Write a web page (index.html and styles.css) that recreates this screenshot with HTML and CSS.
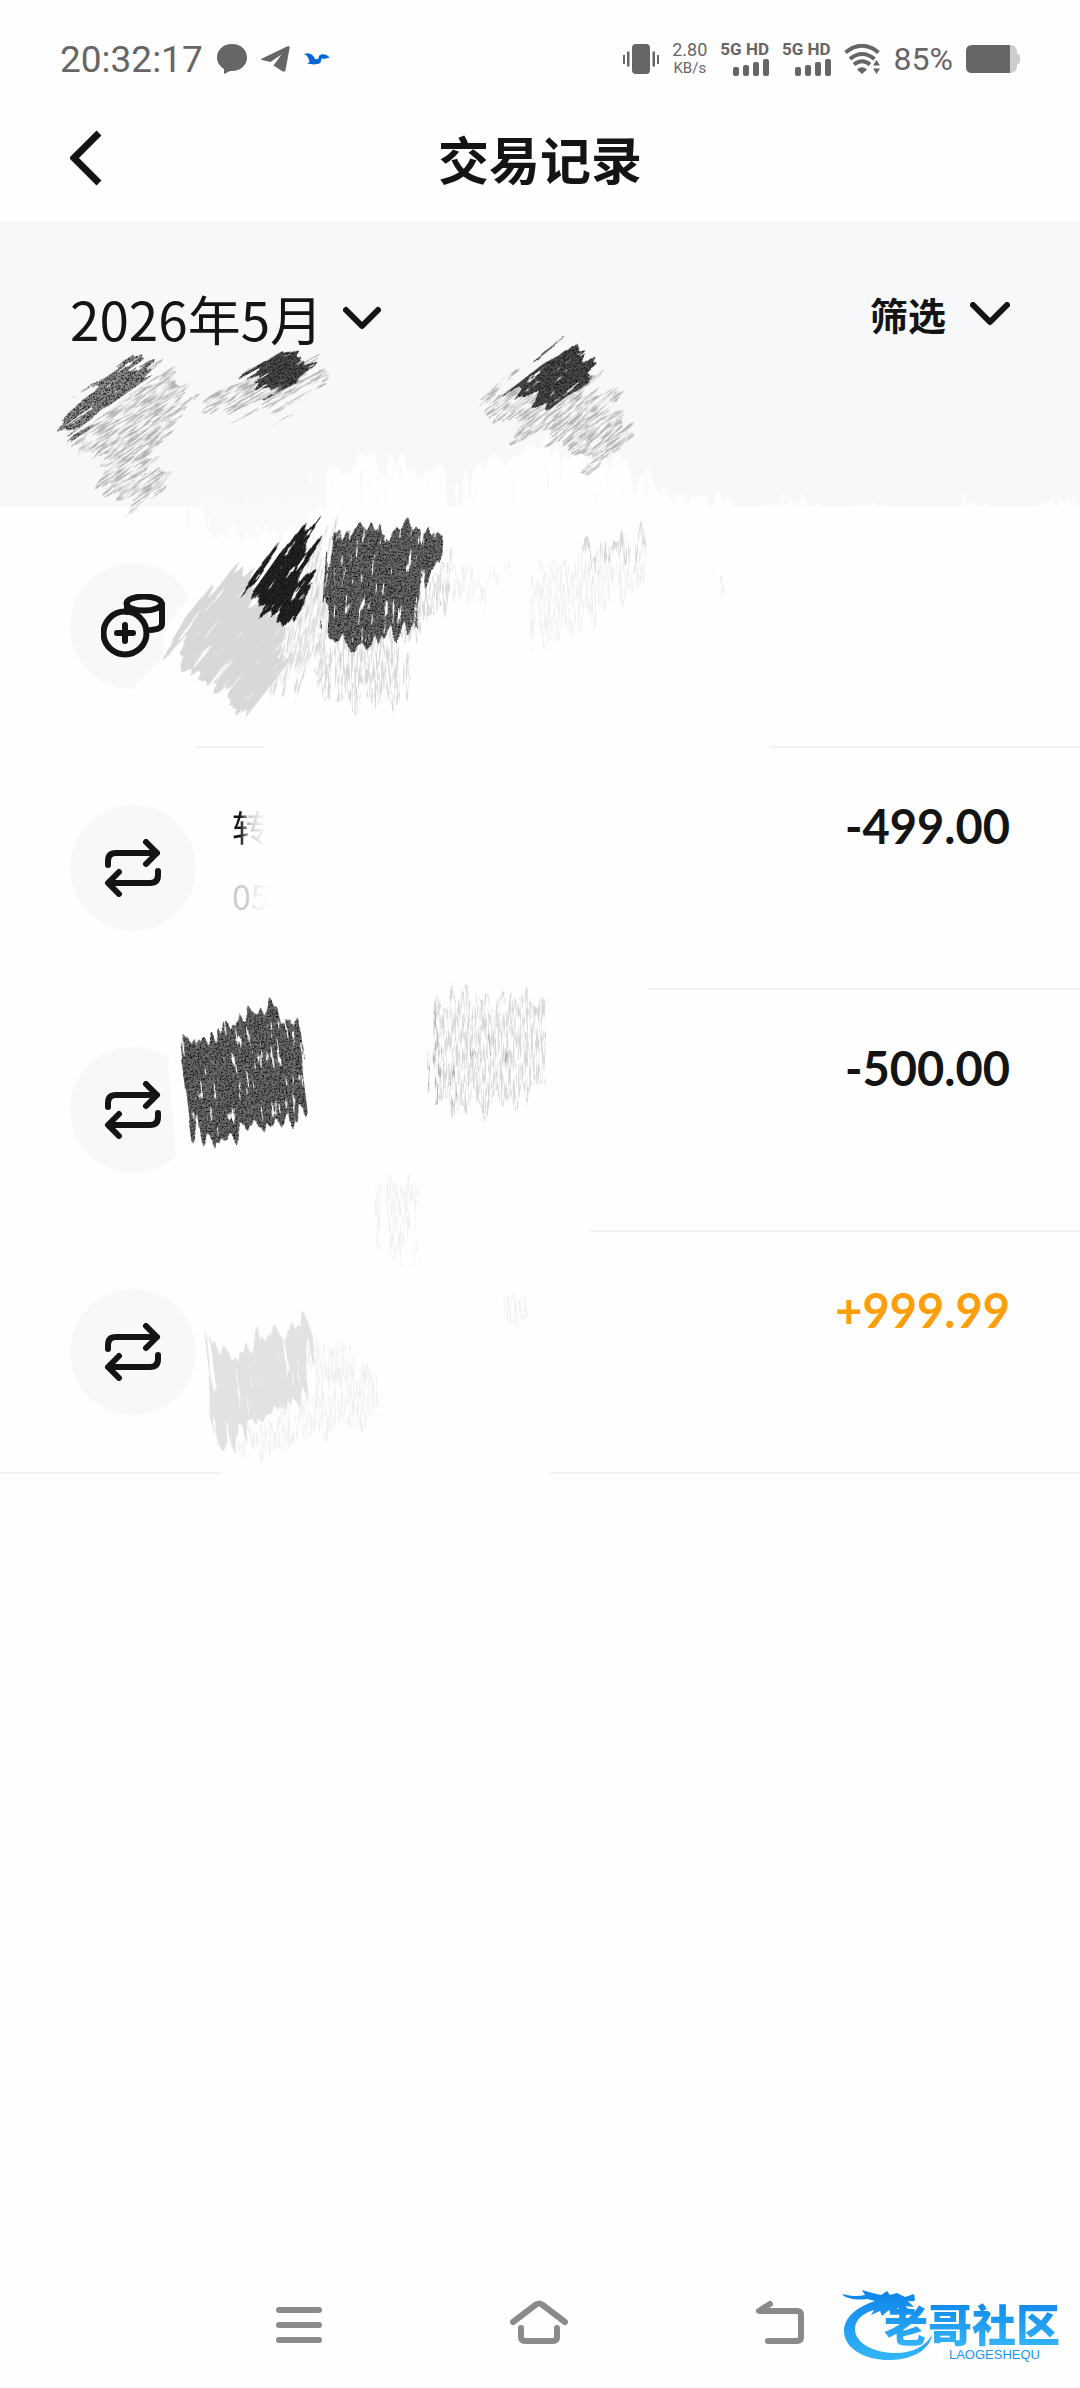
FILE: index.html
```html
<!DOCTYPE html>
<html lang="zh-CN">
<head>
  <meta charset="UTF-8">
  <meta name="viewport" content="width=device-width, initial-scale=1.0">
  <title>交易记录</title>
  <link rel="stylesheet" href="styles.css">
</head>
<body>
  <div class="status-bar">
    <div class="status-left">
      <span class="time">20:32:17</span>
      <svg class="icon-bubble" width="30" height="30" viewBox="0 0 30 30"><path d="M15 0C6 0 0 6 0 13.500c0 5 3 9 7 11.500l0 5 6-3h2c9 0 15-6 15-13.500S24 0 15 0z"/></svg>
      <svg class="icon-plane" width="29" height="26" viewBox="0 0 29 26"><path d="M0 13 26 .5c2-.8 3 0 2.500 2L24.500 24c-.4 2-1.500 2-3 1.200L12.500 19.500l8-11-11 7.500L1 14c-1-.3-1-.7-1-1z"/></svg>
      <svg class="icon-bird" width="26" height="12" viewBox="0 0 26 12"><path d="M0 1C5-1 9 1 11 6c3 1 4-1 4-3 3-3 8-2 11 2-3-1-4 1-6 1-2-1-3 0-3 2 0 2-2 3-4 3-3 1-6 0-10 0 2-1 3-2 2-4C4 4 3 2 0 1z"/></svg>
    </div>
    <div class="status-right">
      <svg width="36" height="30" viewBox="0 0 36 30"><rect x="9" width="18" height="30" rx="4"/><path d="M0 11h2v9H0zM4 7.500h2.500v15H4zM29.500 7.500H32v15h-2.500zM34 11h2v9h-2z"/></svg>
      <div class="speed"><span>2.80</span><small>KB/s</small></div>
      <div class="signal">
        <b>5G HD</b>
        <svg width="36" height="17" viewBox="0 0 36 17"><rect y="8" width="6" height="9" rx="2"/><rect x="10" y="6" width="6" height="11" rx="2"/><rect x="20" y="3" width="6" height="14" rx="2"/><rect x="30" width="6" height="17" rx="2"/></svg>
      </div>
      <div class="signal">
        <b>5G HD</b>
        <svg width="36" height="17" viewBox="0 0 36 17"><rect y="8" width="6" height="9" rx="2"/><rect x="10" y="6" width="6" height="11" rx="2"/><rect x="20" y="3" width="6" height="14" rx="2"/><rect x="30" width="6" height="17" rx="2"/></svg>
      </div>
      <svg class="icon-wifi" width="37" height="30" viewBox="0 0 37 30">
        <path class="arc" d="M1.500 8.500Q18-5 34.500 8.500M6 15Q18 5 30.500 15M10 20.500Q18 14 26 20.500"/>
        <path d="M13 25.500Q18 21 23 25.500L18 30zM29 21.500l3.500-5.500 3.500 5.500zM29 24.500h7L32.500 30z"/>
      </svg>
      <span class="percent">85%</span>
      <svg width="54" height="28" viewBox="0 0 54 28"><path class="battery-rest" d="M43 0h1q7 0 7 7v2q3 0 3 3v4q0 3-3 3v2q0 7-7 7h-1z"/><path d="M6 0h38v28H6q-6 0-6-6V6q0-6 6-6z"/></svg>
    </div>
  </div>

  <header class="header">
    <button class="btn-back" aria-label="返回">
      <svg width="32" height="56" viewBox="0 0 32 56"><path d="M29 3 4 28l25 25"/></svg>
    </button>
    <h1>交易记录</h1>
  </header>

  <main class="main">
    <div class="filter-bar">
      <button class="btn-month">2026年5月
        <svg width="38" height="24" viewBox="0 0 38 24"><path d="M3 4l16 16L35 4"/></svg>
      </button>
      <button class="btn-filter">筛选
        <svg width="40" height="24" viewBox="0 0 40 24"><path d="M3 3l17 17L37 3"/></svg>
      </button>
    </div>

    <ul class="records">
      <li class="record">
        <span class="avatar">
          <svg width="64" height="64" viewBox="0 0 64 64">
            <path d="M26 16v-6M61 10v20q0 5-11 6M26 10v8"/>
            <ellipse cx="43" cy="9.500" rx="17.500" ry="7"/>
            <circle cx="24" cy="39" r="21.500"/>
            <path d="M24 31v16M16 39h16"/>
          </svg>
        </span>
      </li>
      <li class="record">
        <span class="avatar"><svg width="58" height="58" viewBox="0 0 58 58"><path d="M4 26v-4q0-8 8-8h41M42 3l11 11-11 11M54 32v4q0 8-8 8H5M15 33 4 44l11 11"/></svg></span>
        <div class="info">
          <p class="name">转</p>
          <p class="date">05</p>
        </div>
        <span class="amount">-499.00</span>
      </li>
      <li class="record">
        <span class="avatar"><svg width="58" height="58" viewBox="0 0 58 58"><path d="M4 26v-4q0-8 8-8h41M42 3l11 11-11 11M54 32v4q0 8-8 8H5M15 33 4 44l11 11"/></svg></span>
        <span class="amount">-500.00</span>
      </li>
      <li class="record">
        <span class="avatar"><svg width="58" height="58" viewBox="0 0 58 58"><path d="M4 26v-4q0-8 8-8h41M42 3l11 11-11 11M54 32v4q0 8-8 8H5M15 33 4 44l11 11"/></svg></span>
        <span class="amount income">+999.99</span>
      </li>
    </ul>

    <!-- crayon strokes over the private details -->
    <svg class="scribbles" width="1080" height="1260" viewBox="0 222 1080 1260" aria-hidden="true">
      <defs>
        <filter id="dense" x="-20%" y="-20%" width="140%" height="140%" color-interpolation-filters="sRGB">
          <feTurbulence type="fractalNoise" baseFrequency="0.13 0.01" numOctaves="2" seed="4" result="ends"/>
          <feDisplacementMap in="SourceGraphic" in2="ends" scale="36" xChannelSelector="A" yChannelSelector="G" result="shape"/>
          <feTurbulence type="fractalNoise" baseFrequency="0.3 0.04" numOctaves="3" seed="8"/>
          <feColorMatrix values="0 0 0 0 0  0 0 0 0 0  0 0 0 0 0  12 0 0 0 -3" result="gaps"/>
          <feComposite in="shape" in2="gaps" operator="in" result="stroke"/>
          <feTurbulence type="fractalNoise" baseFrequency="0.7" numOctaves="2" seed="2"/>
          <feColorMatrix values="0 0 0 0 0.05  0 0 0 0 0.05  0 0 0 0 0.05  6 0 0 0 -3"/>
          <feComposite in2="stroke" operator="in" result="grain"/>
          <feMerge><feMergeNode in="stroke"/><feMergeNode in="grain"/></feMerge>
        </filter>
        <filter id="flat" x="-20%" y="-20%" width="140%" height="140%" color-interpolation-filters="sRGB">
          <feTurbulence type="fractalNoise" baseFrequency="0.13 0.01" numOctaves="2" seed="6" result="ends"/>
          <feDisplacementMap in="SourceGraphic" in2="ends" scale="44" xChannelSelector="A" yChannelSelector="G" result="shape"/>
          <feTurbulence type="fractalNoise" baseFrequency="0.25 0.02" numOctaves="3" seed="3"/>
          <feColorMatrix values="0 0 0 0 0  0 0 0 0 0  0 0 0 0 0  12 0 0 0 -2.8" result="gaps"/>
          <feComposite in="shape" in2="gaps" operator="in"/>
        </filter>
        <filter id="sparse" x="-20%" y="-20%" width="140%" height="140%" color-interpolation-filters="sRGB">
          <feTurbulence type="fractalNoise" baseFrequency="0.1 0.01" numOctaves="2" seed="9" result="ends"/>
          <feDisplacementMap in="SourceGraphic" in2="ends" scale="60" xChannelSelector="A" yChannelSelector="G" result="shape"/>
          <feTurbulence type="fractalNoise" baseFrequency="0.6 0.06" numOctaves="4" seed="5"/>
          <feColorMatrix values="0 0 0 0 0  0 0 0 0 0  0 0 0 0 0  4 0 0 0 -1.6" result="gaps"/>
          <feComposite in="shape" in2="gaps" operator="in"/>
        </filter>
      </defs>

      <!-- rubbed out parts -->
      <g filter="url(#flat)"><path class="erase" d="M326 540V474l50-14 72 16v60zM467 540v-74l70-18 90 20 40 28 70 4v40zM755 512l40-12 40 12zM850 512l30-8 26 8zM945 512l30-10 20 10zM1030 512l40-16 10 16z"/></g>
      <path class="erase" d="M204 560h556v190H265v-4H195v4H0v-6h112l24-60 28-28v-26l24-32zM0 984h648v10H0zM0 1226h590v10H0zM222 1466h328v14H222zM168 1060l10 120h24V1050zM265 740h505v14H265z"/>
      <g filter="url(#flat)"><path class="tint" d="M195 500h130l-20 30-50 5-50-5z"/></g>

      <g transform="rotate(55 120 430)" filter="url(#sparse)"><path class="c-mid" transform="rotate(-55 120 430)" d="M66 440l70-60 32-8 20 26-34 50 8 36-40 24 2-18-20-8-4-22z"/></g>
      <g transform="rotate(55 110 400)" filter="url(#dense)"><path class="c-ash" transform="rotate(-55 110 400)" d="M62 440l6-28 32-28 40-24 17 8-26 20-44 32z"/></g>
      <g transform="rotate(60 270 390)" filter="url(#sparse)"><path class="c-mid" transform="rotate(-60 270 390)" d="M213 400l36-30 66-4 14 20-50 20-60 14z"/></g>
      <g transform="rotate(60 280 365)" filter="url(#dense)"><path class="c-dark" transform="rotate(-60 280 365)" d="M244 374l40-25 16 3 14 13-16 14-30 14-8-9z"/></g>
      <g transform="rotate(52 560 420)" filter="url(#sparse)"><path class="c-mid" transform="rotate(-52 560 420)" d="M484 412l16-24 104-8 28 40v22l-44 26-30-24-56-10z"/></g>
      <g transform="rotate(52 550 375)" filter="url(#dense)"><path class="c-dark" transform="rotate(-52 550 375)" d="M494 396l64-48 19 6 16 10-4 20-40 26-22-18z"/></g>

      <g transform="rotate(38 230 640)" filter="url(#flat)"><path class="c-silver" transform="rotate(-38 230 640)" d="M234 572l20-2 4 30 27 24-8 56-30 36-26-24-46-30-4-14 8-26z"/></g>
      <g transform="rotate(12 300 610)" filter="url(#sparse)"><path class="c-pale" transform="rotate(-12 300 610)" d="M318 525l26-20-14 40-6 110-54 46 16-80z"/></g>
      <g transform="rotate(35 290 570)" filter="url(#dense)"><path class="c-black" transform="rotate(-35 290 570)" d="M322 514l-8 30-9 42-10 36-24-2-8-20-14 4 6-24 30-36z"/></g>
      <g filter="url(#sparse)"><path class="c-pale" d="M320 636l86-4 18-64 22-8-2 50-38 30-4 60-72 4-12-20z"/></g>
      <g transform="rotate(4 385 585)" filter="url(#dense)"><path class="c-grey" transform="rotate(-4 385 585)" d="M330 545l26-15 28 3 26-5 34 12 2 22-20 10-13 54-40 18-28 4-22-20 3-48z"/></g>
      <g filter="url(#sparse)"><path class="c-faint" d="M528 580l60-30 50-20 2 50-40 30-60 40z"/><path class="c-pale" d="M586 555l24-18 28-4 2 24-20-6-30 22z"/><path class="c-faint" d="M450 572h55v10h-25v22h-24zM720 575h10v18h-10z"/></g>

      <g transform="rotate(-7 240 1078)" filter="url(#dense)"><path class="c-grey" transform="rotate(7 240 1078)" d="M179 1033l18 8 36-20 24-12 20-2 14 16 9 40 6 42-8 15-28 3-36 14-18 4-18-2-8-40-14-38z"/></g>
      <g filter="url(#sparse)"><path class="c-pale" d="M434 1010l12-14 94 2 10 52-4 40-46 12-54 10-16-14z"/><path class="c-mid" d="M434 1030h8l2 66-12 4zM446 1038l10 4v50zM484 1042h5v24h-5z"/><path class="c-faint" d="M375 1190l45-10-4 100-34-20z"/></g>

      <g filter="url(#sparse)"><path class="c-faint" d="M314 1340l40 6 20 44 4 30-70 20-50 18-25-20 90-50zM505 1300h18v20h-18z"/></g>
      <g transform="rotate(-7 260 1385)" filter="url(#flat)"><path class="c-silver-light" transform="rotate(7 260 1385)" d="M204 1342l14 10 48-20 38-10 10 10-4 58-25 15-30 20-14 4-1 22-14-10-14-20z"/></g>
    </svg>
  </main>

  <nav class="nav">
    <button aria-label="菜单"><svg width="46" height="44" viewBox="0 0 46 44"><path d="M3 10h40M3 25h40M3 40h40"/></svg></button>
    <button aria-label="主页"><svg width="58" height="44" viewBox="0 0 58 44"><path d="M3 22 26 4.500q3-2 6 0L55 22M11 28v9q0 4 4 4h28q4 0 4-4v-9"/></svg></button>
    <button aria-label="后退"><svg width="48" height="44" viewBox="0 0 48 44"><path d="M14 4 3 11h38q4 0 4 4v22q0 4-4 4H12"/></svg></button>
  </nav>

  <div class="logo">
    <svg class="logo-dragon" width="92" height="72" viewBox="0 0 92 72">
      <defs><linearGradient id="blue" x2="0" y2="1"><stop offset="0" stop-color="#0d84ea"/><stop offset="1" stop-color="#35b6f8"/></linearGradient></defs>
      <path fill="url(#blue)" d="M33 11C14 17 2 28 2 41c0 18 22 30 48 29 22-1 38-11 40-25-6 11-20 18-36 18-23 0-41-10-41-24 0-9 8-16 19-19l-3 5 9-4 2 5 7-6 3 4 6-6c4 1 7 5 14 6-1-4-5-6-7-8l9 1-6-6c3 0 6 1 7-1l-1-6-9 3-8-4-7 2-3-4-6 4C31 3 26 2 20 0l3 5C15 7 8 6 0 4c4 6 20 6 25 5z"/>
    </svg>
    <div class="logo-text">
      <strong>老哥社区</strong>
      <small>LAOGESHEQU</small>
    </div>
  </div>
</body>
</html>
```
FILE: styles.css
```css
* {
  box-sizing: border-box;
}
body {
  display: flex;
  flex-direction: column;
  min-height: 100vh;
  margin: 0;
  position: relative;
  color: #141414;
  background: #fefefe;
  font-family: "Noto Sans CJK SC", sans-serif;
}
h1, p, ul {
  margin: 0;
  padding: 0;
}
svg {
  display: block;
  flex: none;
}
button {
  padding: 0;
  border: none;
  color: inherit;
  background: none;
  font-family: inherit;
  cursor: pointer;
}
button svg,
.avatar svg {
  fill: none;
  stroke: currentColor;
  stroke-width: 6px;
  stroke-linecap: round;
  stroke-linejoin: round;
}

.status-bar {
  display: flex;
  justify-content: space-between;
  align-items: center;
  height: 118px;
  padding: 0 60px;
  color: #666;
  fill: #666;
  font-family: Roboto, sans-serif;
}
.status-left,
.status-right {
  display: flex;
  align-items: center;
}
.status-left {
  gap: 14px;
}
.status-right {
  gap: 13px;
}
.time {
  font-size: 37px;
}
.icon-bird {
  fill: #0768dc;
}
.speed,
.signal {
  display: flex;
  flex-direction: column;
}
.speed {
  align-items: center;
  font-size: 18px;
  line-height: 18px;
}
.speed small {
  font-size: 15px;
}
.signal {
  align-items: flex-end;
  gap: 3px;
  font-size: 17px;
  line-height: 14px;
}
.icon-wifi .arc {
  fill: none;
  stroke: #666;
  stroke-width: 4px;
}
.percent {
  font-size: 32px;
}
.battery-rest {
  fill: #ccc;
}

.header {
  display: grid;
  grid-template-columns: 1fr auto 1fr;
  align-items: center;
  height: 104px;
  padding: 0 70px 24px;
}
.header h1 {
  font-size: 51px;
  line-height: 56px;
  font-weight: 700;
}
.btn-back {
  justify-self: start;
}
.btn-back svg {
  stroke-width: 7px;
  stroke-linecap: butt;
  stroke-linejoin: miter;
}

.main {
  position: relative;
  flex: 1;
}
.filter-bar {
  display: flex;
  justify-content: space-between;
  align-items: flex-start;
  height: 284px;
  padding: 64px 70px 0;
  background: #f6f8fa;
}
.btn-month,
.btn-filter {
  display: flex;
  align-items: center;
  gap: 24px;
  line-height: 64px;
}
.btn-month {
  gap: 20px;
  font-size: 53px;
}
.btn-filter {
  font-size: 38px;
  line-height: 56px;
  font-weight: 700;
}

.records {
  list-style: none;
}
.record {
  display: flex;
  align-items: center;
  gap: 36px;
  height: 242px;
  padding: 0 70px;
  border-bottom: 2px solid #f2f2f3;
}
.avatar {
  display: flex;
  justify-content: center;
  align-items: center;
  width: 126px;
  height: 126px;
  border-radius: 50%;
  background: #f6f8fa;
}
.info {
  align-self: flex-start;
  padding-top: 50px;
  font-size: 36px;
  line-height: 56px;
}
.name,
.date {
  color: transparent;
  background-clip: text;
  -webkit-background-clip: text;
}
.name {
  background-image: linear-gradient(to right, #141414 8px, #ccc 18px, #fefefe 34px);
}
.date {
  margin-top: 14px;
  font-size: 34px;
  background-image: linear-gradient(to right, #ccc 14px, #eee 24px, #fefefe 36px);
}
.amount {
  align-self: flex-start;
  margin-left: auto;
  padding-top: 50px;
  font-family: Lato, sans-serif;
  font-size: 47px;
  line-height: 56px;
  font-weight: 700;
}
.income {
  color: #fc9f0a;
}

.scribbles {
  position: absolute;
  top: 0;
  left: 0;
  pointer-events: none;
}
.erase { fill: #fefefe; }
.tint { fill: #f8f9fb; }
.c-black { fill: #242424; }
.c-dark { fill: #4c4c4c; }
.c-grey { fill: #6c6c6c; }
.c-ash { fill: #8c8c8c; }
.c-mid { fill: #b4b4b4; }
.c-silver { fill: #d8d8d8; }
.c-silver-light { fill: #e2e2e2; }
.c-pale { fill: #d8d8d8; }
.c-faint { fill: #f0f0f0; }

.nav {
  display: flex;
  justify-content: center;
  align-items: center;
  gap: 188px;
  height: 132px;
  color: #8a8a8a;
}

.logo {
  position: absolute;
  right: 20px;
  bottom: 26px;
  display: flex;
  color: #1c94f0;
}
.logo-text {
  display: flex;
  flex-direction: column;
  align-items: flex-end;
  margin-left: -50px;
  padding-top: 8px;
}
.logo-text strong {
  font-size: 44px;
  line-height: 50px;
  font-weight: 900;
  color: transparent;
  background: linear-gradient(#0d84ea, #35b6f8);
  background-clip: text;
  -webkit-background-clip: text;
}
.logo-text small {
  padding-right: 20px;
  font-family: "Liberation Sans", sans-serif;
  font-size: 13px;
  line-height: 14px;
}
```
